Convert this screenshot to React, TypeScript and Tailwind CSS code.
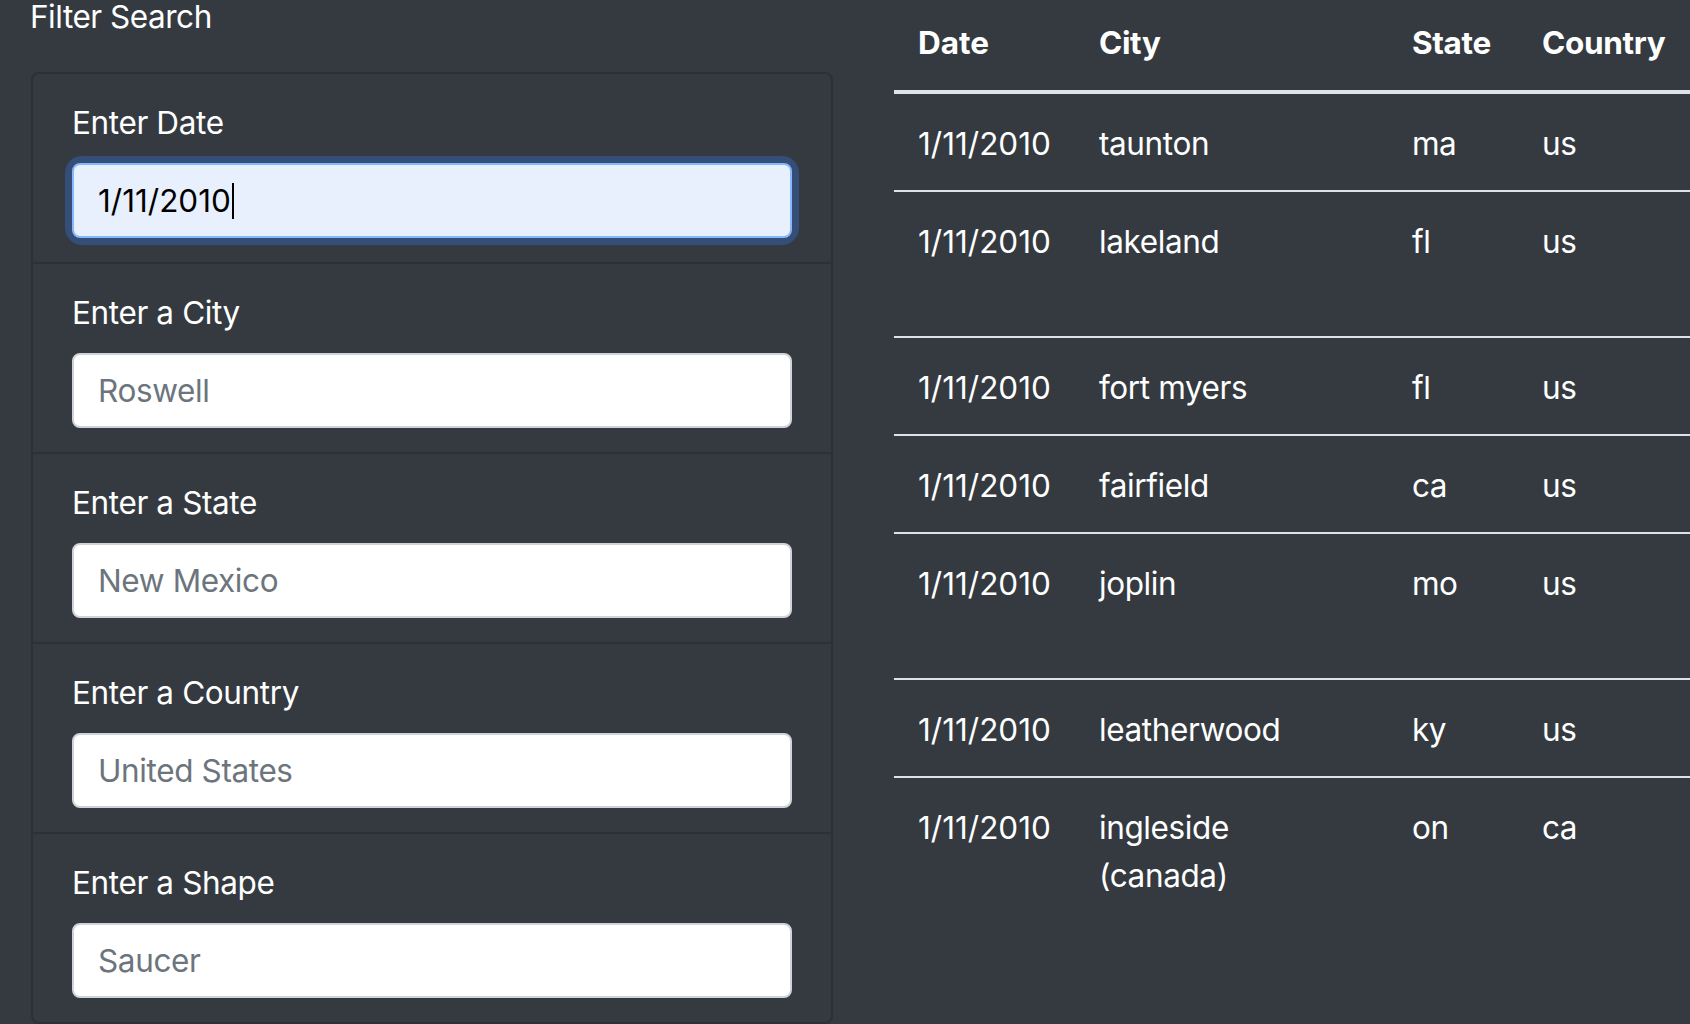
import React from "react";

const fields = [
  { id: "date", label: "Enter Date", placeholder: "", value: "1/11/2010" },
  { id: "city", label: "Enter a City", placeholder: "Roswell", value: "" },
  { id: "state", label: "Enter a State", placeholder: "New Mexico", value: "" },
  { id: "country", label: "Enter a Country", placeholder: "United States", value: "" },
  { id: "shape", label: "Enter a Shape", placeholder: "Saucer", value: "" },
];

const rows = [
  { date: "1/11/2010", city: "taunton", state: "ma", country: "us", tall: false },
  { date: "1/11/2010", city: "lakeland", state: "fl", country: "us", tall: true },
  { date: "1/11/2010", city: "fort myers", state: "fl", country: "us", tall: false },
  { date: "1/11/2010", city: "fairfield", state: "ca", country: "us", tall: false },
  { date: "1/11/2010", city: "joplin", state: "mo", country: "us", tall: true },
  { date: "1/11/2010", city: "leatherwood", state: "ky", country: "us", tall: false },
  { date: "1/11/2010", city: "ingleside (canada)", state: "on", country: "ca", tall: false },
];

function FilterField({
  field,
  last,
}: {
  field: (typeof fields)[number];
  last: boolean;
}) {
  const focused = field.value !== "";
  return (
    <li
      className={`px-[39px] pt-[25px] pb-[24px] ${
        last ? "" : "border-b-2 border-[#2c3136]"
      }`}
    >
      <label
        htmlFor={field.id}
        className="block text-[31.5px] leading-[48px] mb-[16px] tracking-[-0.012em] text-white"
      >
        {field.label}
      </label>
      {focused ? (
        <div className="rounded-[10px] shadow-[0_0_0_7px_#344e78]">
          <div
            id={field.id}
            role="textbox"
            className="flex items-center h-[75px] rounded-[8px] border-2 border-[#86b7fa] bg-[#e8f0fe] px-[24px] text-[31.5px] text-black"
          >
            <span>{field.value}</span>
            <span className="w-[2px] h-[36px] bg-black ml-[1px]" />
          </div>
        </div>
      ) : (
        <input
          id={field.id}
          type="text"
          placeholder={field.placeholder}
          className="block w-full h-[75px] rounded-[8px] border-2 border-[#ced4da] bg-white px-[24px] text-[31.5px] tracking-[-0.012em] text-[#495057] placeholder:text-[#6c757d] outline-none"
        />
      )}
    </li>
  );
}

export default function App() {
  return (
    <div
      className="min-h-screen h-[1024px] overflow-hidden bg-[#343a40] text-white flex"
      style={{ fontFamily: "Inter, 'Liberation Sans', sans-serif" }}
    >
      <aside className="w-[862px] shrink-0 pl-[31px] pr-[29px]">
        <h3 className="-ml-[1px] text-[31.5px] leading-[33px] font-normal tracking-[-0.015em] mb-[39px]">
          Filter Search
        </h3>
        <ul className="border-2 border-[#2c3136] rounded-[8px]">
          {fields.map((f, i) => (
            <FilterField key={f.id} field={f} last={i === fields.length - 1} />
          ))}
        </ul>
      </aside>

      <main className="flex-1 min-w-0 pl-[32px] overflow-hidden">
        <table className="-mt-[6px] w-[1100px] border-collapse text-left text-[31.5px] leading-[48px]">
          <colgroup>
            <col className="w-[180px]" />
            <col className="w-[313px]" />
            <col className="w-[130px]" />
            <col />
          </colgroup>
          <thead>
            <tr className="border-b-4 border-[#dee2e6]">
              <th className="px-[24px] pt-[25px] pb-[23px] font-bold align-bottom">Date</th>
              <th className="px-[24px] pt-[25px] pb-[23px] font-bold align-bottom tracking-[-0.01em]">City</th>
              <th className="px-[24px] pt-[25px] pb-[23px] font-bold align-bottom tracking-[-0.01em]">State</th>
              <th className="px-[24px] pt-[25px] pb-[23px] font-bold align-bottom tracking-[-0.01em]">Country</th>
            </tr>
          </thead>
          <tbody>
            {rows.map((r, i) => (
              <tr
                key={i}
                className={`align-top ${i > 0 ? "border-t-2 border-[#dee2e6]" : ""}`}
              >
                <td className={`px-[24px] pt-[26px] pb-[22px] ${r.tall ? "h-[146px]" : ""}`}>
                  {r.date}
                </td>
                <td className="px-[24px] pt-[26px] pb-[22px] tracking-[-0.012em]">{r.city}</td>
                <td className="px-[24px] pt-[26px] pb-[22px] tracking-[-0.012em]">{r.state}</td>
                <td className="px-[24px] pt-[26px] pb-[22px] tracking-[-0.012em]">{r.country}</td>
              </tr>
            ))}
          </tbody>
        </table>
      </main>
    </div>
  );
}
